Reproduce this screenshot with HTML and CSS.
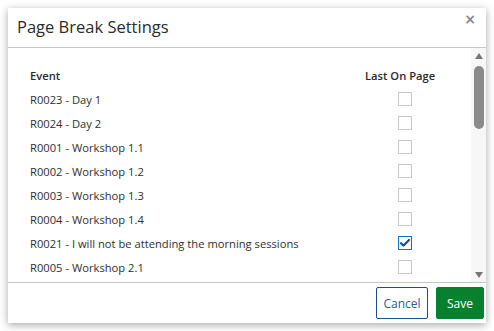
FILE: index.html
```html
<!DOCTYPE html>
<html lang="en">
<head>
  <meta charset="UTF-8" />
  <meta name="viewport" content="width=device-width, initial-scale=1" />
  <title>Page Break Settings</title>
  <link rel="stylesheet" href="styles.css">
</head>
<body>
  <div class="modal">
    <div class="modal-header">
      <h2>Page Break Settings</h2>
      <button class="close" aria-label="Close">&times;</button>
    </div>

    <div class="modal-body">
      <div class="scroll-area">
        <div class="row head">
          <span>Event</span>
          <span class="col-last">Last On Page</span>
        </div>
        <div class="row"><span>R0023 - Day 1</span><span class="col-check"><i class="box"></i></span></div>
        <div class="row"><span>R0024 - Day 2</span><span class="col-check"><i class="box"></i></span></div>
        <div class="row"><span>R0001 - Workshop 1.1</span><span class="col-check"><i class="box"></i></span></div>
        <div class="row"><span>R0002 - Workshop 1.2</span><span class="col-check"><i class="box"></i></span></div>
        <div class="row"><span>R0003 - Workshop 1.3</span><span class="col-check"><i class="box"></i></span></div>
        <div class="row"><span>R0004 - Workshop 1.4</span><span class="col-check"><i class="box"></i></span></div>
        <div class="row"><span>R0021 - I will not be attending the morning sessions</span><span class="col-check"><i class="box checked"><svg viewBox="0 0 14 14" width="14" height="14"><path d="M3 7.2 L5.6 9.6 L11 4" fill="none" stroke="#1b4f86" stroke-width="2.2" stroke-linecap="round" stroke-linejoin="round"/></svg></i></span></div>
        <div class="row"><span>R0005 - Workshop 2.1</span><span class="col-check"><i class="box"></i></span></div>
      </div>

      <!-- scrollbar (drawn, the list is ~3x taller than the view) -->
      <div class="scrollbar">
        <span class="sb-btn"><svg width="8" height="6" viewBox="0 0 8 6"><path d="M0 6 L4 0 L8 6 Z" fill="#777"/></svg></span>
        <div class="sb-track"><div class="sb-thumb"></div></div>
        <span class="sb-btn"><svg width="8" height="6" viewBox="0 0 8 6"><path d="M0 0 L4 6 L8 0 Z" fill="#777"/></svg></span>
      </div>
    </div>

    <div class="modal-footer">
      <button class="btn btn-cancel">Cancel</button>
      <button class="btn btn-save">Save</button>
    </div>
  </div>
</body>
</html>
```

FILE: styles.css
```css
* {
  margin: 0;
  padding: 0;
  box-sizing: border-box;
}
body {
  background: #fff;
  padding: 8px;
  font-family: 'Open Sans', 'Liberation Sans', sans-serif;
  color: #333;
}

.modal {
  width: 478px;
  height: 315px;
  background: #fff;
  box-shadow: 0 2px 8px rgba(0, 0, 0, 0.35);
  display: flex;
  flex-direction: column;
}

/* Header */
.modal-header {
  position: relative;
  height: 40px;
  border-bottom: 1px solid #c6c6c6;
  padding: 6px 9px;
}
.modal-header h2 {
  font-size: 16.5px;
  font-weight: 400;
  line-height: 26px;
  color: #2b2b2b;
}
.close {
  position: absolute;
  top: 3px;
  right: 10px;
  background: none;
  border: none;
  font-family: 'DejaVu Sans', sans-serif;
  font-size: 14px;
  font-weight: 700;
  color: #8a8a8a;
  cursor: pointer;
}

/* Body */
.modal-body {
  height: 234px;
  display: flex;
}
.scroll-area {
  flex: 1;
  overflow: hidden;
  padding: 15px 26px 0 22px;
}
.scrollbar {
  width: 15px;
  background: #f7f7f7;
  display: flex;
  flex-direction: column;
}
.sb-btn {
  height: 15px;
  display: flex;
  justify-content: center;
  align-items: center;
}
.sb-btn svg {
  display: block;
}
.sb-track {
  flex: 1;
  padding: 3px 2px 0 3px;
}
.sb-thumb {
  height: 63px;
  background: #8b8b8b;
  border-radius: 5px;
}

.row {
  display: grid;
  grid-template-columns: 1fr 80px;
  height: 24px;
  align-items: center;
  font-size: 11.2px;
  color: #2f2f2f;
  white-space: nowrap;
}
.row.head {
  font-weight: 600;
  color: #2b2b2b;
}
.col-check {
  display: flex;
  justify-content: center;
}
.box {
  display: block;
  width: 14px;
  height: 14px;
  border: 1px solid #c8c8c8;
  background: #fff;
}
.box.checked {
  border: 1.5px solid #1573c7;
}
.box.checked svg {
  display: block;
  margin: -1.5px 0 0 -1.5px;
}

/* Footer */
.modal-footer {
  height: 41px;
  border-top: 1px solid #c6c6c6;
  display: flex;
  justify-content: flex-end;
  align-items: center;
  gap: 8px;
  padding: 0 2px 0 0;
}
.btn {
  height: 32px;
  font-family: 'Open Sans', 'Liberation Sans', sans-serif;
  font-size: 12px;
  border-radius: 2px;
  cursor: pointer;
}
.btn-cancel {
  width: 52px;
  background: #fff;
  color: #1d5da0;
  border: 1px solid #1c4f8a;
}
.btn-save {
  width: 48px;
  background: #07812d;
  color: #fff;
  border: 1px solid #07812d;
}
```
